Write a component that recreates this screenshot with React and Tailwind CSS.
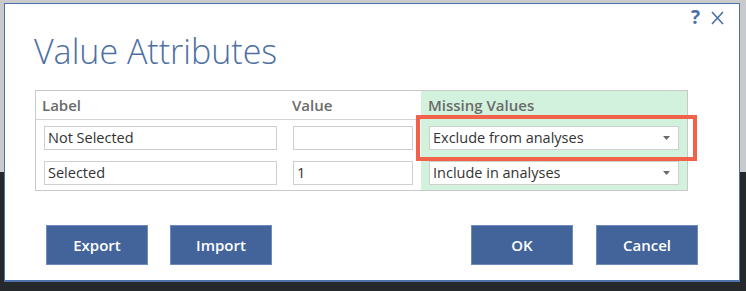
import React from "react";

const rows = [
  { label: "Not Selected", value: "", missing: "Exclude from analyses" },
  { label: "Selected", value: "1", missing: "Include in analyses" },
];

const DialogButton = ({ children }) => (
  <button className="w-[102px] h-[40px] bg-[#43649a] border border-[#6d8cbd] text-white text-[15px] font-semibold">
    {children}
  </button>
);

const App = () => {
  return (
    <div
      className="w-[746px] h-[291px] pt-[3px] pl-[4px] bg-[linear-gradient(to_bottom,#c9cacb_0,#c9cacb_172px,#25292c_172px)]"
      style={{ fontFamily: '"Open Sans", "Liberation Sans", sans-serif' }}
    >
      <div className="w-[736px] h-[279px] bg-white border border-[#4e72ab] border-b-2 relative">
        {/* top-right actions */}
        <div className="flex justify-end items-center gap-[11px] pr-[15px] pt-[5px] h-[22px] text-[#4a6ea6]">
          <span className="text-[19px] font-bold leading-none">?</span>
          <svg width="13" height="14" viewBox="0 0 13 14" stroke="currentColor" strokeWidth="1.6">
            <path d="M1 1 L12 13 M12 1 L1 13" />
          </svg>
        </div>

        <h1 className="pl-[29px] mt-[3px] text-[34px] leading-[44px] font-light text-[#4d6fa4]">
          Value Attributes
        </h1>

        {/* table */}
        <div className="relative ml-[30px] mt-[17px] w-[653px] border border-[#c9c9c9] text-[14.5px] text-[#333]">
          <div className="grid grid-cols-[245px_140px_266px]">
            <div className="h-[29px] pl-[6px] flex items-center text-[15px] font-semibold text-[#6b6b6b] border-b border-[#d4d4d4]">
              Label
            </div>
            <div className="h-[29px] pl-[11px] flex items-center text-[15px] font-semibold text-[#6b6b6b] border-b border-[#d4d4d4]">
              Value
            </div>
            <div className="h-[29px] pl-[7px] flex items-center text-[15px] font-semibold text-[#6b6b6b] bg-[#d2f2dd]">
              Missing Values
            </div>
            {rows.map((row) => (
              <React.Fragment key={row.label}>
                <div className="h-[35px] pl-[8px] flex items-center">
                  <div className="w-[233px] h-[24px] border border-[#cfcfcf] pl-[3px] flex items-center">
                    {row.label}
                  </div>
                </div>
                <div className="h-[35px] pl-[12px] flex items-center">
                  <div className="w-[120px] h-[24px] border border-[#cfcfcf] pl-[3px] flex items-center">
                    {row.value}
                  </div>
                </div>
                <div className="h-[35px] pl-[8px] flex items-center bg-[#d2f2dd]">
                  <div className="w-[250px] h-[24px] border border-[#cfcfcf] bg-white pl-[3px] pr-[8px] flex items-center justify-between">
                    <span>{row.missing}</span>
                    <svg width="7" height="4" viewBox="0 0 7 4">
                      <path d="M0 0 L7 0 L3.5 4 Z" fill="#6a6a6a" />
                    </svg>
                  </div>
                </div>
              </React.Fragment>
            ))}
          </div>
          {/* highlight annotation */}
          <div className="absolute left-[380px] top-[24px] w-[281px] h-[46px] border-4 border-[#f2614a] pointer-events-none" />
        </div>

        {/* buttons */}
        <div className="flex justify-between mt-[34px] pl-[41px] pr-[41px]">
          <div className="flex gap-[22px]">
            <DialogButton>Export</DialogButton>
            <DialogButton>Import</DialogButton>
          </div>
          <div className="flex gap-[23px]">
            <DialogButton>OK</DialogButton>
            <DialogButton>Cancel</DialogButton>
          </div>
        </div>
      </div>
    </div>
  );
};

export default App;
